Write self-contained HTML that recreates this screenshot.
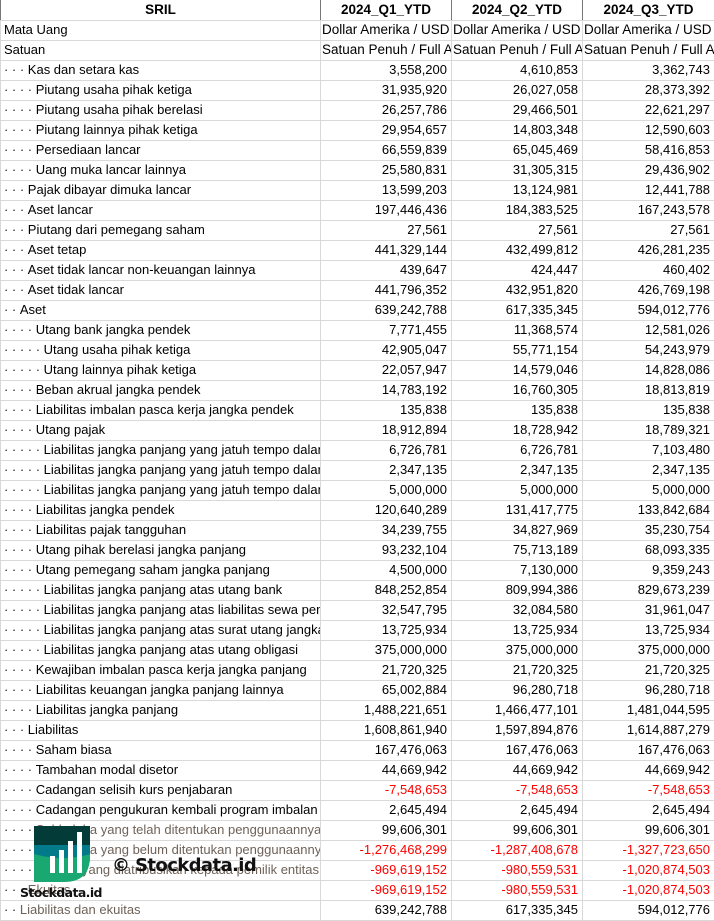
<!DOCTYPE html>
<html><head><meta charset="utf-8">
<style>
*{margin:0;padding:0;box-sizing:border-box}
body{width:714px;height:921px;overflow:hidden;background:#fff;font-family:"Liberation Sans",Arial,sans-serif;font-size:13px;color:#000;position:relative}
table{border-collapse:collapse;table-layout:fixed;width:714px}
td{height:20px;border:1px solid #d9d9d9;white-space:nowrap;overflow:hidden;padding:0 3px;line-height:18px}
td.n{text-align:right;padding-right:4px}
tr.h td{font-weight:bold;text-align:center;border-left:1px solid #777;border-right:1px solid #777;border-top:none;font-size:13.5px}
td.u{padding:0 1px;font-size:13.5px}
.d{letter-spacing:3.6px;color:#222}
.r{color:#f00}
.b{color:#6e6258}
.wm{position:absolute;font-weight:bold;font-family:"DejaVu Sans","Liberation Sans",sans-serif}
</style></head><body>
<table>
<colgroup><col style="width:320px"><col style="width:131px"><col style="width:131px"><col style="width:132px"></colgroup>
<tr class="h"><td>SRIL</td><td>2024_Q1_YTD</td><td>2024_Q2_YTD</td><td>2024_Q3_YTD</td></tr>
<tr><td>Mata Uang</td><td class="u">Dollar Amerika / USD</td><td class="u">Dollar Amerika / USD</td><td class="u">Dollar Amerika / USD</td></tr>
<tr><td>Satuan</td><td class="u">Satuan Penuh / Full Amount</td><td class="u">Satuan Penuh / Full Amount</td><td class="u">Satuan Penuh / Full Amount</td></tr>
<tr><td><span class="d">···</span>Kas dan setara kas</td><td class="n">3,558,200</td><td class="n">4,610,853</td><td class="n">3,362,743</td></tr>
<tr><td><span class="d">····</span>Piutang usaha pihak ketiga</td><td class="n">31,935,920</td><td class="n">26,027,058</td><td class="n">28,373,392</td></tr>
<tr><td><span class="d">····</span>Piutang usaha pihak berelasi</td><td class="n">26,257,786</td><td class="n">29,466,501</td><td class="n">22,621,297</td></tr>
<tr><td><span class="d">····</span>Piutang lainnya pihak ketiga</td><td class="n">29,954,657</td><td class="n">14,803,348</td><td class="n">12,590,603</td></tr>
<tr><td><span class="d">····</span>Persediaan lancar</td><td class="n">66,559,839</td><td class="n">65,045,469</td><td class="n">58,416,853</td></tr>
<tr><td><span class="d">····</span>Uang muka lancar lainnya</td><td class="n">25,580,831</td><td class="n">31,305,315</td><td class="n">29,436,902</td></tr>
<tr><td><span class="d">···</span>Pajak dibayar dimuka lancar</td><td class="n">13,599,203</td><td class="n">13,124,981</td><td class="n">12,441,788</td></tr>
<tr><td><span class="d">···</span>Aset lancar</td><td class="n">197,446,436</td><td class="n">184,383,525</td><td class="n">167,243,578</td></tr>
<tr><td><span class="d">···</span>Piutang dari pemegang saham</td><td class="n">27,561</td><td class="n">27,561</td><td class="n">27,561</td></tr>
<tr><td><span class="d">···</span>Aset tetap</td><td class="n">441,329,144</td><td class="n">432,499,812</td><td class="n">426,281,235</td></tr>
<tr><td><span class="d">···</span>Aset tidak lancar non-keuangan lainnya</td><td class="n">439,647</td><td class="n">424,447</td><td class="n">460,402</td></tr>
<tr><td><span class="d">···</span>Aset tidak lancar</td><td class="n">441,796,352</td><td class="n">432,951,820</td><td class="n">426,769,198</td></tr>
<tr><td><span class="d">··</span>Aset</td><td class="n">639,242,788</td><td class="n">617,335,345</td><td class="n">594,012,776</td></tr>
<tr><td><span class="d">····</span>Utang bank jangka pendek</td><td class="n">7,771,455</td><td class="n">11,368,574</td><td class="n">12,581,026</td></tr>
<tr><td><span class="d">·····</span>Utang usaha pihak ketiga</td><td class="n">42,905,047</td><td class="n">55,771,154</td><td class="n">54,243,979</td></tr>
<tr><td><span class="d">·····</span>Utang lainnya pihak ketiga</td><td class="n">22,057,947</td><td class="n">14,579,046</td><td class="n">14,828,086</td></tr>
<tr><td><span class="d">····</span>Beban akrual jangka pendek</td><td class="n">14,783,192</td><td class="n">16,760,305</td><td class="n">18,813,819</td></tr>
<tr><td><span class="d">····</span>Liabilitas imbalan pasca kerja jangka pendek</td><td class="n">135,838</td><td class="n">135,838</td><td class="n">135,838</td></tr>
<tr><td><span class="d">····</span>Utang pajak</td><td class="n">18,912,894</td><td class="n">18,728,942</td><td class="n">18,789,321</td></tr>
<tr><td><span class="d">·····</span>Liabilitas jangka panjang yang jatuh tempo dalam satu tahun</td><td class="n">6,726,781</td><td class="n">6,726,781</td><td class="n">7,103,480</td></tr>
<tr><td><span class="d">·····</span>Liabilitas jangka panjang yang jatuh tempo dalam satu tahun</td><td class="n">2,347,135</td><td class="n">2,347,135</td><td class="n">2,347,135</td></tr>
<tr><td><span class="d">·····</span>Liabilitas jangka panjang yang jatuh tempo dalam satu tahun</td><td class="n">5,000,000</td><td class="n">5,000,000</td><td class="n">5,000,000</td></tr>
<tr><td><span class="d">····</span>Liabilitas jangka pendek</td><td class="n">120,640,289</td><td class="n">131,417,775</td><td class="n">133,842,684</td></tr>
<tr><td><span class="d">····</span>Liabilitas pajak tangguhan</td><td class="n">34,239,755</td><td class="n">34,827,969</td><td class="n">35,230,754</td></tr>
<tr><td><span class="d">····</span>Utang pihak berelasi jangka panjang</td><td class="n">93,232,104</td><td class="n">75,713,189</td><td class="n">68,093,335</td></tr>
<tr><td><span class="d">····</span>Utang pemegang saham jangka panjang</td><td class="n">4,500,000</td><td class="n">7,130,000</td><td class="n">9,359,243</td></tr>
<tr><td><span class="d">·····</span>Liabilitas jangka panjang atas utang bank</td><td class="n">848,252,854</td><td class="n">809,994,386</td><td class="n">829,673,239</td></tr>
<tr><td><span class="d">·····</span>Liabilitas jangka panjang atas liabilitas sewa pembiayaan</td><td class="n">32,547,795</td><td class="n">32,084,580</td><td class="n">31,961,047</td></tr>
<tr><td><span class="d">·····</span>Liabilitas jangka panjang atas surat utang jangka menengah</td><td class="n">13,725,934</td><td class="n">13,725,934</td><td class="n">13,725,934</td></tr>
<tr><td><span class="d">·····</span>Liabilitas jangka panjang atas utang obligasi</td><td class="n">375,000,000</td><td class="n">375,000,000</td><td class="n">375,000,000</td></tr>
<tr><td><span class="d">····</span>Kewajiban imbalan pasca kerja jangka panjang</td><td class="n">21,720,325</td><td class="n">21,720,325</td><td class="n">21,720,325</td></tr>
<tr><td><span class="d">····</span>Liabilitas keuangan jangka panjang lainnya</td><td class="n">65,002,884</td><td class="n">96,280,718</td><td class="n">96,280,718</td></tr>
<tr><td><span class="d">····</span>Liabilitas jangka panjang</td><td class="n">1,488,221,651</td><td class="n">1,466,477,101</td><td class="n">1,481,044,595</td></tr>
<tr><td><span class="d">···</span>Liabilitas</td><td class="n">1,608,861,940</td><td class="n">1,597,894,876</td><td class="n">1,614,887,279</td></tr>
<tr><td><span class="d">····</span>Saham biasa</td><td class="n">167,476,063</td><td class="n">167,476,063</td><td class="n">167,476,063</td></tr>
<tr><td><span class="d">····</span>Tambahan modal disetor</td><td class="n">44,669,942</td><td class="n">44,669,942</td><td class="n">44,669,942</td></tr>
<tr><td><span class="d">····</span>Cadangan selisih kurs penjabaran</td><td class="n r">-7,548,653</td><td class="n r">-7,548,653</td><td class="n r">-7,548,653</td></tr>
<tr><td><span class="d">····</span>Cadangan pengukuran kembali program imbalan pasti</td><td class="n">2,645,494</td><td class="n">2,645,494</td><td class="n">2,645,494</td></tr>
<tr><td class="b"><span class="d">····</span>Saldo laba yang telah ditentukan penggunaannya</td><td class="n">99,606,301</td><td class="n">99,606,301</td><td class="n">99,606,301</td></tr>
<tr><td class="b"><span class="d">····</span>Saldo laba yang belum ditentukan penggunaannya</td><td class="n r">-1,276,468,299</td><td class="n r">-1,287,408,678</td><td class="n r">-1,327,723,650</td></tr>
<tr><td class="b"><span class="d">····</span>Ekuitas yang diatribusikan kepada pemilik entitas induk</td><td class="n r">-969,619,152</td><td class="n r">-980,559,531</td><td class="n r">-1,020,874,503</td></tr>
<tr><td class="b"><span class="d">···</span>Ekuitas</td><td class="n r">-969,619,152</td><td class="n r">-980,559,531</td><td class="n r">-1,020,874,503</td></tr>
<tr><td class="b"><span class="d">··</span>Liabilitas dan ekuitas</td><td class="n">639,242,788</td><td class="n">617,335,345</td><td class="n">594,012,776</td></tr>
</table>

<svg style="position:absolute;left:34px;top:826px" width="57" height="57" viewBox="0 0 57 57">
<defs><clipPath id="c"><path d="M0 0H56V30Q56 56 30 56H0Z"/></clipPath></defs>
<g clip-path="url(#c)">
<rect x="0" y="0" width="57" height="20" fill="#033b38"/>
<rect x="0" y="19" width="57" height="18" fill="#027a8a"/>
<path d="M0 28Q28 36 57 28V57H0Z" fill="#1aa872"/>
</g>
<rect x="16" y="30" width="5" height="17" fill="#fff"/>
<rect x="25" y="24" width="5" height="23" fill="#fff"/>
<rect x="34" y="15" width="5" height="32" fill="#fff"/>
<rect x="43" y="6" width="5" height="41" fill="#fff"/>
</svg>
<div class="wm" style="left:20px;top:885px;font-size:12.5px;color:#111;letter-spacing:-0.6px">Stockdata.id</div>
<div class="wm" style="left:112px;top:855px;font-size:18px;color:#111;letter-spacing:-0.6px">© Stockdata.id</div>
</body></html>
